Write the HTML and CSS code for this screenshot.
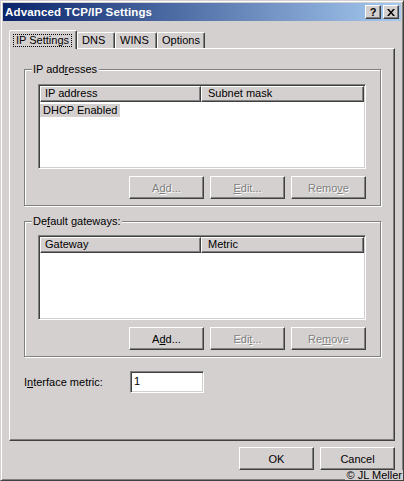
FILE: index.html
```html
<!DOCTYPE html>
<html>
<head>
<meta charset="utf-8">
<link rel="stylesheet" href="styles.css">
</head>
<body>
<div class="window">
  <div class="titlebar">
    <span class="title">Advanced TCP/IP Settings</span>
    <div class="caption-btns">
      <div class="cap-btn help">?</div>
      <div class="cap-btn close">
        <svg width="8" height="7" viewBox="0 0 8 7"><path d="M0 0h2l2 2.5L6 0h2L5 3.5 8 7H6L4 4.5 2 7H0l3-3.5z" fill="#000"/></svg>
      </div>
    </div>
  </div>
  <div class="body">
    <div class="tabs">
      <div class="tab active"><span class="focus">IP Settings</span></div>
      <div class="tab w-dns">DNS</div>
      <div class="tab w-wins">WINS</div>
      <div class="tab w-opt">Options</div>
    </div>
    <div class="panel">
      <div class="group">
        <div class="group-title">IP add<u>r</u>esses</div>
        <div class="list">
          <div class="list-head">
            <div class="col c1">IP address</div>
            <div class="col c2">Subnet mask</div>
          </div>
          <div class="list-body"><div class="row sel">DHCP Enabled</div></div>
        </div>
        <div class="btn-row">
          <div class="btn disabled">A<u>d</u>d...</div>
          <div class="btn disabled"><u>E</u>dit...</div>
          <div class="btn disabled">Remo<u>v</u>e</div>
        </div>
      </div>
      <div class="group second">
        <div class="group-title">De<u>f</u>ault gateways:</div>
        <div class="list">
          <div class="list-head">
            <div class="col c1">Gateway</div>
            <div class="col c2">Metric</div>
          </div>
          <div class="list-body"></div>
        </div>
        <div class="btn-row">
          <div class="btn">A<u>d</u>d...</div>
          <div class="btn disabled">Edi<u>t</u>...</div>
          <div class="btn disabled">Re<u>m</u>ove</div>
        </div>
      </div>
      <div class="metric-row">
        <span class="metric-label">I<u>n</u>terface metric:</span>
        <div class="input">1</div>
      </div>
    </div>
    <div class="dialog-btns">
      <div class="btn">OK</div>
      <div class="btn">Cancel</div>
    </div>
  </div>
  <div class="copyright">© JL Meller</div>
</div>
</body>
</html>
```

FILE: styles.css
```css
* { box-sizing: border-box; }
html, body { margin: 0; padding: 0; background: #d5d0d0; }
body {
  font-family: "Liberation Sans", Arial, sans-serif;
  font-size: 11px;
  color: #000;
}
u { text-decoration: underline; text-underline-offset: 1px; }

.window {
  position: relative;
  width: 404px;
  height: 481px;
  background: #d5d0d0;
  border: 1px solid;
  border-color: #d5d0d0 #404040 #404040 #d5d0d0;
  box-shadow: inset 1px 1px #fff, inset -1px -1px #808080;
  padding: 2px;
}

.titlebar {
  height: 18px;
  display: flex;
  align-items: center;
  justify-content: space-between;
  padding: 0 2px 0 2px;
  background: linear-gradient(to right, #0a246a, #a6caf0);
}
.title {
  color: #fff;
  font-weight: bold;
  font-size: 11.5px;
  letter-spacing: 0.15px;
}
.caption-btns { display: flex; gap: 2px; }
.cap-btn {
  width: 16px;
  height: 14px;
  background: #d5d0d0;
  border: 1px solid;
  border-color: #fff #404040 #404040 #fff;
  box-shadow: inset -1px -1px #808080;
  display: flex;
  align-items: center;
  justify-content: center;
}
.cap-btn.help { font-weight: bold; font-size: 11px; line-height: 12px; }

.body { padding: 9px 6px 0 6px; }

.tabs {
  display: flex;
  align-items: flex-end;
  height: 18px;
  position: relative;
  z-index: 2;
}
.tab {
  height: 16px;
  border-top: 1px solid #fff;
  border-left: 1px solid #fff;
  border-right: 1px solid #404040;
  box-shadow: inset -1px 0 #808080;
  border-radius: 2px 2px 0 0;
  padding-left: 4px;
  line-height: 14px;
  background: #d5d0d0;
}
.tab.active {
  width: 68px;
  height: 19px;
  margin-bottom: -1px;
  padding-left: 3px;
  padding-top: 2px;
}
.focus {
  display: inline-block;
  border: 1px dotted #000;
  padding: 0 2px;
  line-height: 11px;
}
.w-dns { width: 38px; }
.w-wins { width: 42px; }
.w-opt { width: 48px; }

.panel {
  height: 393px;
  border-top: 1px solid #fff;
  border-left: 1px solid #fff;
  border-right: 1px solid #404040;
  border-bottom: 1px solid #404040;
  box-shadow: inset -1px -1px #808080;
  padding: 20px 13px 0 14px;
}

.group {
  border: 1px solid #808080;
  box-shadow: inset 1px 1px #fff, 1px 1px #fff;
  padding: 0 14px 6px 13px;
}
.group.second { margin-top: 15px; }
.group.second .list { margin-top: 7px; }
.group-title {
  width: fit-content;
  margin: -7px 0 0 -6px;
  padding: 0 2px 0 1px;
  background: #d5d0d0;
  line-height: 13px;
}

.list {
  margin-top: 8px;
  height: 85px;
  background: #fff;
  border: 1px solid;
  border-color: #808080 #fff #fff #808080;
  box-shadow: inset 1px 1px #404040, inset -1px -1px #d5d0d0;
  padding: 1px;
  display: flex;
  flex-direction: column;
}
.list-head {
  display: flex;
  height: 16px;
}
.col {
  height: 16px;
  background: #d5d0d0;
  border-top: 1px solid #fff;
  border-left: 1px solid #fff;
  border-right: 1px solid #404040;
  border-bottom: 1px solid #404040;
  box-shadow: inset -1px -1px #808080;
  line-height: 13px;
}
.col.c1 { width: 161px; padding-left: 4px; }
.col.c2 { flex: 1; padding-left: 6px; }
.list-body { flex: 1; padding-top: 2px; }
.row.sel {
  display: inline-block;
  background: #d5d0d0;
  padding: 0 3px 0 3px;
  line-height: 13px;
  margin-left: 0;
}

.btn-row {
  margin-top: 7px;
  display: flex;
  justify-content: flex-end;
  gap: 6px;
}
.btn {
  width: 75px;
  height: 23px;
  border: 1px solid;
  border-color: #fff #404040 #404040 #fff;
  box-shadow: inset -1px -1px #808080;
  display: flex;
  align-items: center;
  justify-content: center;
  background: #d5d0d0;
}
.btn.disabled {
  color: #808080;
  text-shadow: 1px 1px #fff;
}

.metric-row {
  margin-top: 14px;
  display: flex;
  align-items: center;
}
.metric-label { width: 106px; }
.input {
  width: 74px;
  height: 22px;
  background: #fff;
  border: 1px solid;
  border-color: #808080 #fff #fff #808080;
  box-shadow: inset 1px 1px #404040, inset -1px -1px #d5d0d0;
  padding: 2px 0 0 3px;
  line-height: 14px;
}

.dialog-btns {
  margin-top: 6px;
  display: flex;
  justify-content: flex-end;
  gap: 6px;
}

.copyright {
  position: absolute;
  right: 0;
  bottom: 0;
  background: #d5d0d0;
  font-size: 11px;
  line-height: 10px;
  padding: 0 1px 0 2px;
}
```
